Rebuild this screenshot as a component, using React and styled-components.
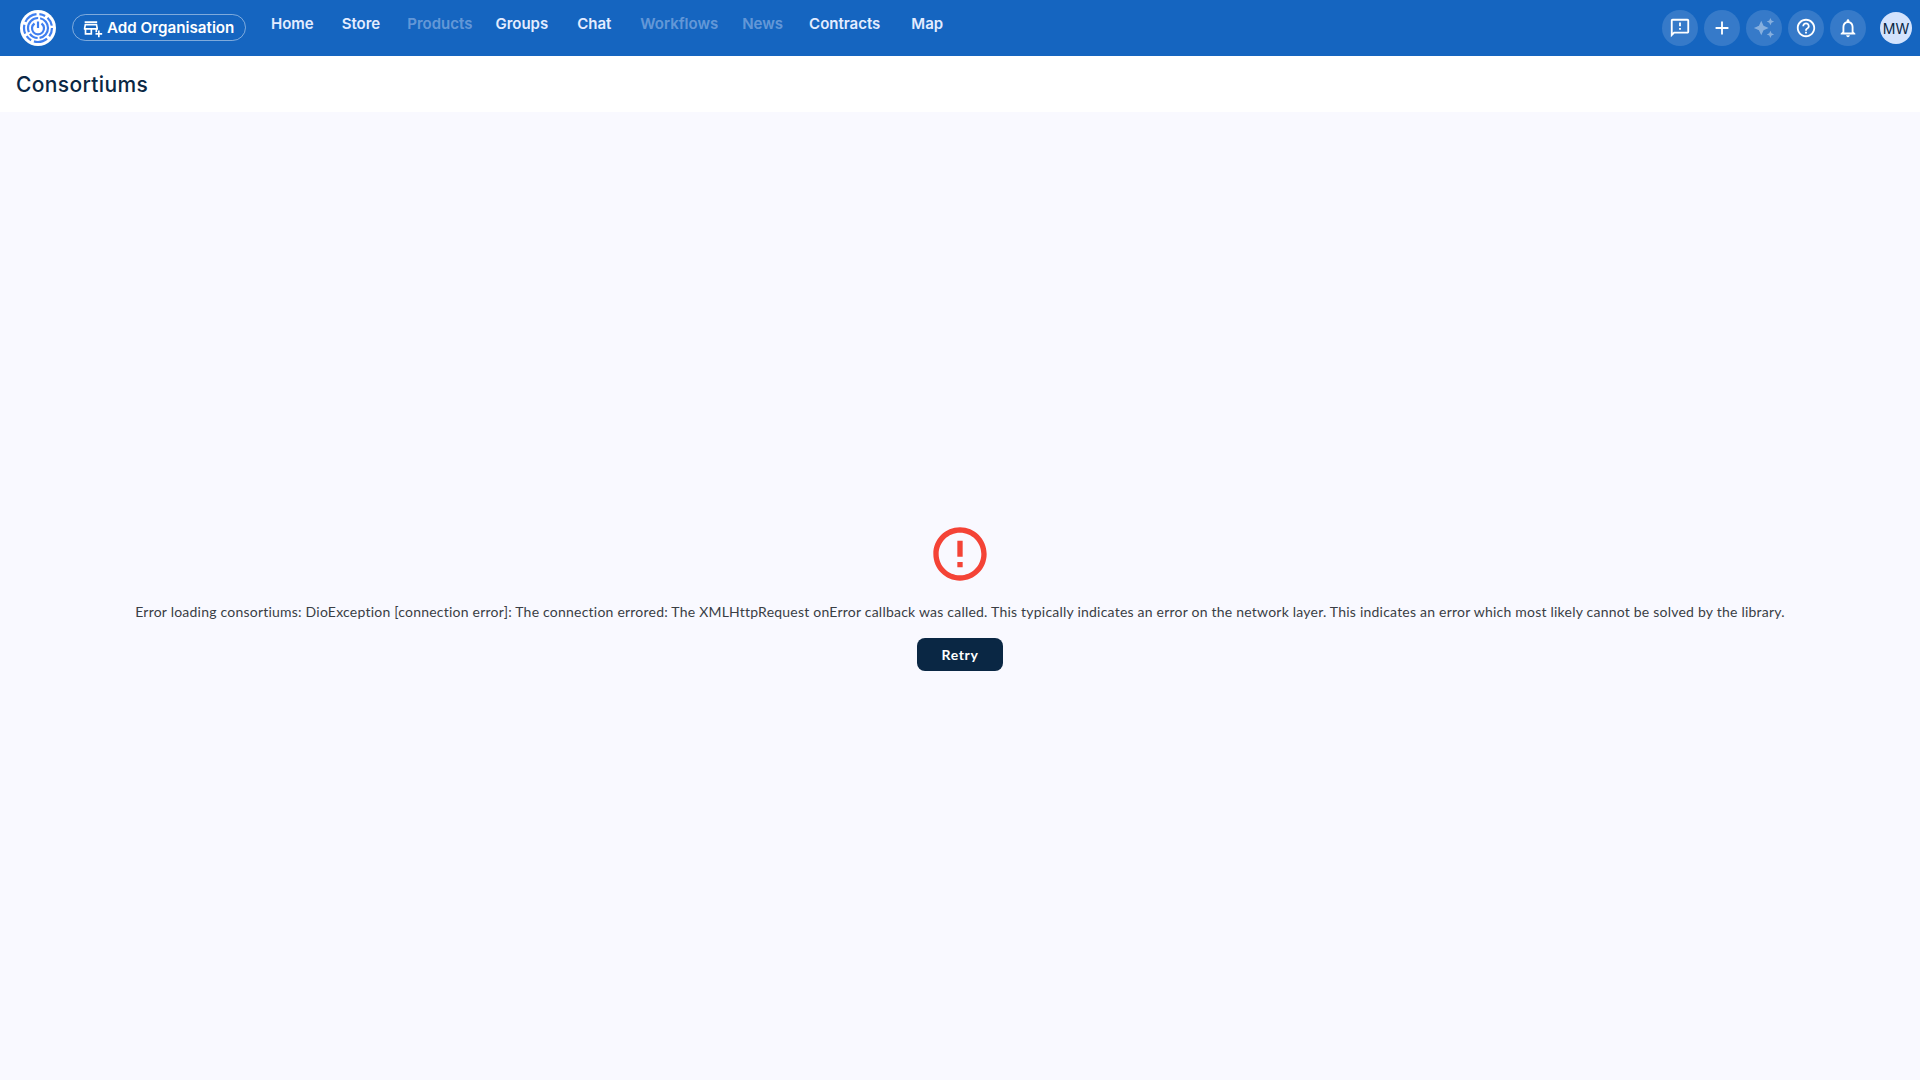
import styled, { createGlobalStyle } from "styled-components";
import {
  MdAdd,
  MdAutoAwesome,
  MdErrorOutline,
  MdHelpOutline,
  MdOutlineAddBusiness,
  MdOutlineFeedback,
  MdOutlineNotifications,
} from "react-icons/md";

const NAV_ITEMS = [
  { label: "Home", left: 0 },
  { label: "Store", left: 28 },
  { label: "Products", left: 27, muted: true },
  { label: "Groups", left: 23 },
  { label: "Chat", left: 29 },
  { label: "Workflows", left: 29, muted: true },
  { label: "News", left: 24, muted: true },
  { label: "Contracts", left: 26 },
  { label: "Map", left: 31 },
];

const GlobalStyle = createGlobalStyle`
  html, body {
    margin: 0;
    height: 100%;
  }
  body {
    background: #f9f9ff;
    font-family: "Inter", "Liberation Sans", sans-serif;
  }
  #root {
    height: 100%;
  }
`;

const Page = styled.div`
  display: flex;
  flex-direction: column;
  height: 1080px;
  overflow: hidden;
`;

const TopBar = styled.header`
  display: flex;
  align-items: center;
  flex: 0 0 56px;
  padding: 0 8px 0 20px;
  background: #1565c0;
  box-sizing: border-box;
`;

const LogoWrap = styled.div`
  display: flex;
  width: 36px;
  height: 36px;
  margin-right: 16px;
`;

const OrgButton = styled.button`
  display: flex;
  align-items: center;
  gap: 4px;
  width: 174px;
  height: 27px;
  margin: 0 25px 1px 0;
  padding: 0 0 0 10px;
  border: 1px solid rgba(255, 255, 255, 0.45);
  border-radius: 14px;
  background: transparent;
  color: #fff;
  font-family: inherit;
  font-size: 15.2px;
  font-weight: 600;
  box-sizing: border-box;
`;

const Nav = styled.nav`
  display: flex;
  align-items: center;
  flex: 1;
  padding-bottom: 8px;
`;

const NavLink = styled.a`
  margin-left: ${(p) => p.$left}px;
  color: ${(p) => (p.$muted ? "rgba(227, 236, 255, 0.4)" : "#e3ecff")};
  font-size: 15px;
  font-weight: 600;
  line-height: 20px;
`;

const Actions = styled.div`
  display: flex;
  align-items: center;
  gap: 6px;
`;

const RoundButton = styled.button`
  display: flex;
  align-items: center;
  justify-content: center;
  width: 36px;
  height: 36px;
  padding: 0;
  border: 0;
  border-radius: 50%;
  background: rgba(255, 255, 255, 0.14);
  color: ${(p) => (p.$muted ? "rgba(255, 255, 255, 0.4)" : "#fff")};
  font-size: 22px;
`;

const Avatar = styled.div`
  display: flex;
  align-items: center;
  justify-content: center;
  width: 32px;
  height: 32px;
  margin-left: 8px;
  border-radius: 50%;
  background: #d3e3fd;
  color: #0a2744;
  font-size: 14px;
`;

const TitleBar = styled.div`
  display: flex;
  align-items: center;
  flex: 0 0 56px;
  padding-left: 16px;
  background: #fff;
`;

const Title = styled.h1`
  margin: 0;
  color: #0a2744;
  font-family: "Inter", sans-serif;
  font-size: 21px;
  font-weight: 500;
  letter-spacing: 0.35px;
`;

const Content = styled.main`
  display: flex;
  flex: 1;
  flex-direction: column;
  align-items: center;
  justify-content: center;
  background: #f9f9ff;
`;

const ErrorIcon = styled.div`
  display: flex;
  color: #f44336;
  font-size: 64px;
`;

const Message = styled.p`
  margin: 16px 0;
  color: #3a3e45;
  font-family: "Lato", sans-serif;
  font-size: 14px;
  letter-spacing: 0.22px;
  line-height: 20px;
  text-align: center;
`;

const RetryButton = styled.button`
  width: 86px;
  height: 33px;
  border: 0;
  border-radius: 8px;
  background: #0a2744;
  color: #fff;
  font-family: "Lato", sans-serif;
  font-size: 14px;
  font-weight: 700;
  letter-spacing: 0.6px;
`;

const Logo = () => (
  <svg viewBox="0 0 36 36" width="36" height="36">
    <circle cx="18" cy="18" r="18" fill="#fff" />
    <g fill="none" stroke="#3f7ff0" strokeWidth="2.2">
      <circle cx="18" cy="18" r="14" strokeDasharray="9 3 14 3 6 3" />
      <circle cx="18" cy="18" r="10" strokeDasharray="14 2 9 2 20 2" />
      <path d="M14.5 13.5a6 6 0 1 0 7 0" />
      <path d="M18 11.5v6.5" />
    </g>
  </svg>
);

const App = () => {
  return (
    <Page>
      <GlobalStyle />
      <TopBar>
        <LogoWrap>
          <Logo />
        </LogoWrap>
        <OrgButton>
          <MdOutlineAddBusiness size={20} />
          Add Organisation
        </OrgButton>
        <Nav>
          {NAV_ITEMS.map((item) => (
            <NavLink key={item.label} $left={item.left} $muted={item.muted}>
              {item.label}
            </NavLink>
          ))}
        </Nav>
        <Actions>
          <RoundButton>
            <MdOutlineFeedback />
          </RoundButton>
          <RoundButton>
            <MdAdd />
          </RoundButton>
          <RoundButton $muted>
            <MdAutoAwesome />
          </RoundButton>
          <RoundButton>
            <MdHelpOutline />
          </RoundButton>
          <RoundButton>
            <MdOutlineNotifications />
          </RoundButton>
          <Avatar>MW</Avatar>
        </Actions>
      </TopBar>
      <TitleBar>
        <Title>Consortiums</Title>
      </TitleBar>
      <Content>
        <ErrorIcon>
          <MdErrorOutline />
        </ErrorIcon>
        <Message>
          Error loading consortiums: DioException [connection error]: The connection errored: The
          XMLHttpRequest onError callback was called. This typically indicates an error on the
          network layer. This indicates an error which most likely cannot be solved by the library.
        </Message>
        <RetryButton>Retry</RetryButton>
      </Content>
    </Page>
  );
};

export default App;
